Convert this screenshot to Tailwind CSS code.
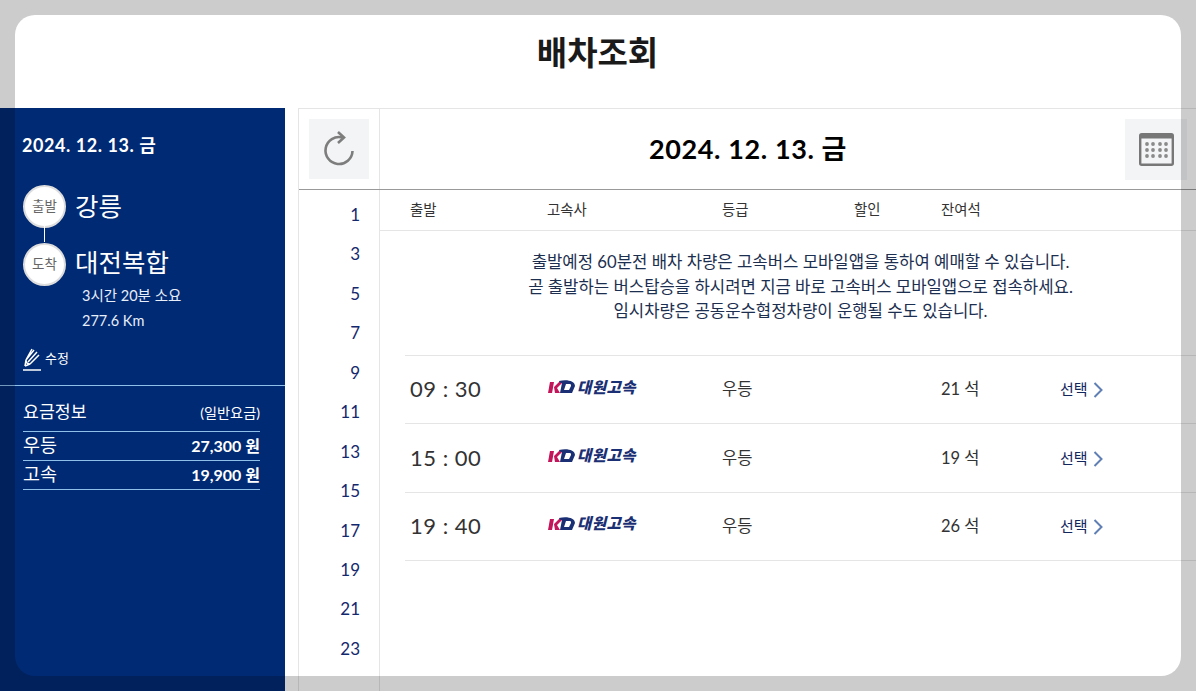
<!DOCTYPE html>
<html lang="ko">
<head>
  <meta charset="UTF-8" />
  <title>배차조회</title>
  <script src="https://cdn.jsdelivr.net/npm/@tailwindcss/browser@4"></script>
</head>
<body class="bg-white h-[691px] w-[1196px] overflow-hidden font-['Lato','Noto_Sans_CJK_KR',sans-serif] text-[#222] relative">
  <h1 class="h-[108px] pt-[30px] pr-[1px] text-center text-[33px] leading-[44px] font-bold text-[#1a1a1a]">배차조회</h1>

  <div class="flex h-[583px]">
    <!-- 좌측 요약 -->
    <aside class="w-[285px] shrink-0 bg-[#002a73] text-white">
      <p class="pl-[22px] pt-[25px] text-[18px] leading-[24px] font-bold tracking-[0.55px]">2024. 12. 13. 금</p>

      <div class="relative pl-[23px] mt-[27px]">
        <div class="absolute left-[44px] top-[38px] h-[20px] w-[1px] bg-white"></div>
        <div class="flex items-center gap-[9px] h-[44px]">
          <span class="w-[43px] h-[43px] rounded-full bg-white border-2 border-[#ddd] text-[#666] text-[13.5px] flex items-center justify-center">출발</span>
          <span class="text-[25.5px] leading-[32px]">강릉</span>
        </div>
        <div class="flex items-center gap-[9px] h-[44px] mt-[14px]">
          <span class="w-[43px] h-[43px] rounded-full bg-white border-2 border-[#ddd] text-[#666] text-[13.5px] flex items-center justify-center">도착</span>
          <span class="text-[25.5px] leading-[32px] -mt-[5px]">대전복합</span>
        </div>
        <p class="pl-[59px] -mt-[3px] text-[14.5px] leading-[26px] text-[#e8eefa]">3시간 20분 소요</p>
        <p class="pl-[59px] -mt-[1px] text-[14.5px] leading-[26px] text-[#e8eefa]">277.6 Km</p>
      </div>

      <div class="flex items-center gap-[4px] pl-[23px] mt-[14px] h-[26px]">
        <svg class="w-[18px] h-[24px] -mt-[5px]" viewBox="0 0 18 24" fill="none" stroke="#fff" stroke-width="1.5">
          <path d="M2 19l1-6 6-11M3 13l8-10M5 15l9-10M7 17l9-9M3 13c0 3 2 4 4 4M2 19l5-2" />
          <path d="M0 23h18" />
        </svg>
        <span class="text-[13px] leading-[18px] -mt-[6px]">수정</span>
      </div>

      <div class="mt-[11px] border-t border-[#8fc0ea] pt-[7px] px-[23px] w-[285px]">
        <div class="w-[237px]">
          <div class="flex justify-between items-end h-[30px] pb-[8px] border-b border-[#8fc0ea] box-content">
            <span class="text-[17.3px] leading-[22px]">요금정보</span>
            <span class="text-[14.2px] leading-[20px]">(일반요금)</span>
          </div>
          <div class="flex justify-between items-center h-[29px] border-b border-[#8fc0ea]">
            <span class="text-[18.5px]">우등</span>
            <span class="text-[16px] font-bold">27,300 원</span>
          </div>
          <div class="flex justify-between items-center h-[29px] border-b border-[#8fc0ea]">
            <span class="text-[18.5px]">고속</span>
            <span class="text-[16px] font-bold">19,900 원</span>
          </div>
        </div>
      </div>
    </aside>

    <!-- 배차 목록 -->
    <main class="ml-[13px] flex-1 border-l border-t border-[#e5e5e5] min-w-0">
      <div class="flex h-[81px] border-b border-[#999]">
        <div class="w-[81px] shrink-0 border-r border-[#e5e5e5] pl-[10px] pt-[10px]">
          <button class="w-[60px] h-[60px] bg-[#f3f4f6] flex items-center justify-center">
            <svg class="w-[32px] h-[36px]" viewBox="0 0 32 36" fill="none" stroke="#7d7d7d" stroke-width="2.6">
              <path d="M19.5 6.5A13.5 13.5 0 1 0 29.5 20" />
              <path d="M15 1l6 5.5-6 5.5" />
            </svg>
          </button>
        </div>
        <div class="flex-1 relative flex items-center">
          <p class="w-[736px] text-center text-[27px] font-bold text-black tracking-[0.6px]">2024. 12. 13. 금</p>
          <button class="absolute left-[745px] top-[10px] w-[62px] h-[61px] bg-[#f3f4f6] flex items-center justify-center">
            <svg class="w-[35px] h-[33px]" viewBox="0 0 35 33">
              <rect x="1.2" y="1.2" width="32.6" height="30.6" rx="1.5" fill="none" stroke="#777" stroke-width="2.4" />
              <rect x="1" y="1" width="33" height="4.5" fill="#777" />
              <g fill="#8a8a8a">
                <circle cx="8" cy="11" r="1.9" /><circle cx="14" cy="11" r="1.9" /><circle cx="21" cy="11" r="1.9" /><circle cx="27" cy="11" r="1.9" />
                <circle cx="8" cy="17" r="1.9" /><circle cx="14" cy="17" r="1.9" /><circle cx="21" cy="17" r="1.9" /><circle cx="27" cy="17" r="1.9" />
                <circle cx="8" cy="23" r="1.9" /><circle cx="14" cy="23" r="1.9" /><circle cx="21" cy="23" r="1.9" /><circle cx="27" cy="23" r="1.9" />
              </g>
            </svg>
          </button>
        </div>
      </div>

      <div class="flex">
        <!-- 시간 선택 -->
        <ul class="w-[81px] shrink-0 h-[502px] border-r border-[#e5e5e5] pt-[5px] text-[#14286e] text-[17px]">
          <li class="h-[39.45px] leading-[39px] text-right pr-[19px]">1</li>
          <li class="h-[39.45px] leading-[39px] text-right pr-[19px]">3</li>
          <li class="h-[39.45px] leading-[39px] text-right pr-[19px]">5</li>
          <li class="h-[39.45px] leading-[39px] text-right pr-[19px]">7</li>
          <li class="h-[39.45px] leading-[39px] text-right pr-[19px]">9</li>
          <li class="h-[39.45px] leading-[39px] text-right pr-[19px]">11</li>
          <li class="h-[39.45px] leading-[39px] text-right pr-[19px]">13</li>
          <li class="h-[39.45px] leading-[39px] text-right pr-[19px]">15</li>
          <li class="h-[39.45px] leading-[39px] text-right pr-[19px]">17</li>
          <li class="h-[39.45px] leading-[39px] text-right pr-[19px]">19</li>
          <li class="h-[39.45px] leading-[39px] text-right pr-[19px]">21</li>
          <li class="h-[39.45px] leading-[39px] text-right pr-[19px]">23</li>
        </ul>

        <div class="flex-1 min-w-0">
          <div class="flex h-[41px] items-center border-b border-[#e5e5e5] text-[14.4px] text-[#333] pb-[1px]">
            <span class="pl-[30px] w-[167px]">출발</span>
            <span class="w-[175px]">고속사</span>
            <span class="w-[132px]">등급</span>
            <span class="w-[87px]">할인</span>
            <span>잔여석</span>
          </div>

          <div class="h-[124px] pt-[19px] pl-[25px] text-center text-[16.7px] leading-[24.5px] text-[#1c2f50]">
            <p>출발예정 60분전 배차 차량은 고속버스 모바일앱을 통하여 예매할 수 있습니다.</p>
            <p>곧 출발하는 버스탑승을 하시려면 지금 바로 고속버스 모바일앱으로 접속하세요.</p>
            <p>임시차량은 공동운수협정차량이 운행될 수도 있습니다.</p>
          </div>

          <div class="ml-[25px] border-t border-[#e5e5e5]">
            <div class="flex items-center h-[68.4px] border-b border-[#e5e5e5] text-[16.5px] text-[#333]">
              <span class="pl-[5px] w-[142px] text-[22px] tracking-[0.5px] -mt-[2px]">09 : 30</span>
              <span class="w-[175px]"><span class="inline-flex items-center h-[18px]"><svg class="w-[29px] h-[16px]" viewBox="0 0 29 16"><path d="M1 14L3 3h4L5 14z" fill="#c4145a" /><path d="M7 8l6-6h4l-7 7 3 5H8z" fill="#c4145a" /><path d="M12 2c8-2 16 0 16 5l-3 7H13l2-10c-1 0-2 0-3-2z" fill="#1b2f74" /><path d="M19 5h4c1 0 1 1 1 2l-2 4h-5z" fill="#fff" /></svg><span class="ml-[1px] text-[15.5px] font-black italic text-[#1b2f74] tracking-[0.5px]">대원고속</span></span></span>
              <span class="w-[219px]">우등</span>
              <span class="w-[119px]">21 석</span>
              <span class="text-[15px] text-[#12265e]">선택</span>
              <svg class="ml-[5px] mt-[1px] w-[10px] h-[16px]" viewBox="0 0 10 16" fill="none" stroke="#5f7fb5" stroke-width="2"><path d="M1.5 1l7 7-7 7" /></svg>
            </div>
            <div class="flex items-center h-[68.4px] border-b border-[#e5e5e5] text-[16.5px] text-[#333]">
              <span class="pl-[5px] w-[142px] text-[22px] tracking-[0.5px] -mt-[2px]">15 : 00</span>
              <span class="w-[175px]"><span class="inline-flex items-center h-[18px]"><svg class="w-[29px] h-[16px]" viewBox="0 0 29 16"><path d="M1 14L3 3h4L5 14z" fill="#c4145a" /><path d="M7 8l6-6h4l-7 7 3 5H8z" fill="#c4145a" /><path d="M12 2c8-2 16 0 16 5l-3 7H13l2-10c-1 0-2 0-3-2z" fill="#1b2f74" /><path d="M19 5h4c1 0 1 1 1 2l-2 4h-5z" fill="#fff" /></svg><span class="ml-[1px] text-[15.5px] font-black italic text-[#1b2f74] tracking-[0.5px]">대원고속</span></span></span>
              <span class="w-[219px]">우등</span>
              <span class="w-[119px]">19 석</span>
              <span class="text-[15px] text-[#12265e]">선택</span>
              <svg class="ml-[5px] mt-[1px] w-[10px] h-[16px]" viewBox="0 0 10 16" fill="none" stroke="#5f7fb5" stroke-width="2"><path d="M1.5 1l7 7-7 7" /></svg>
            </div>
            <div class="flex items-center h-[68.4px] border-b border-[#e5e5e5] text-[16.5px] text-[#333]">
              <span class="pl-[5px] w-[142px] text-[22px] tracking-[0.5px] -mt-[2px]">19 : 40</span>
              <span class="w-[175px]"><span class="inline-flex items-center h-[18px]"><svg class="w-[29px] h-[16px]" viewBox="0 0 29 16"><path d="M1 14L3 3h4L5 14z" fill="#c4145a" /><path d="M7 8l6-6h4l-7 7 3 5H8z" fill="#c4145a" /><path d="M12 2c8-2 16 0 16 5l-3 7H13l2-10c-1 0-2 0-3-2z" fill="#1b2f74" /><path d="M19 5h4c1 0 1 1 1 2l-2 4h-5z" fill="#fff" /></svg><span class="ml-[1px] text-[15.5px] font-black italic text-[#1b2f74] tracking-[0.5px]">대원고속</span></span></span>
              <span class="w-[219px]">우등</span>
              <span class="w-[119px]">26 석</span>
              <span class="text-[15px] text-[#12265e]">선택</span>
              <svg class="ml-[5px] mt-[1px] w-[10px] h-[16px]" viewBox="0 0 10 16" fill="none" stroke="#5f7fb5" stroke-width="2"><path d="M1.5 1l7 7-7 7" /></svg>
            </div>
          </div>
        </div>
      </div>
    </main>
  </div>

  <!-- 모달 바깥 딤 처리 -->
  <div class="absolute left-[15px] top-[15px] w-[1166px] h-[661px] rounded-[20px] shadow-[0_0_0_1200px_rgba(0,0,0,0.2)] pointer-events-none"></div>
</body>
</html>
